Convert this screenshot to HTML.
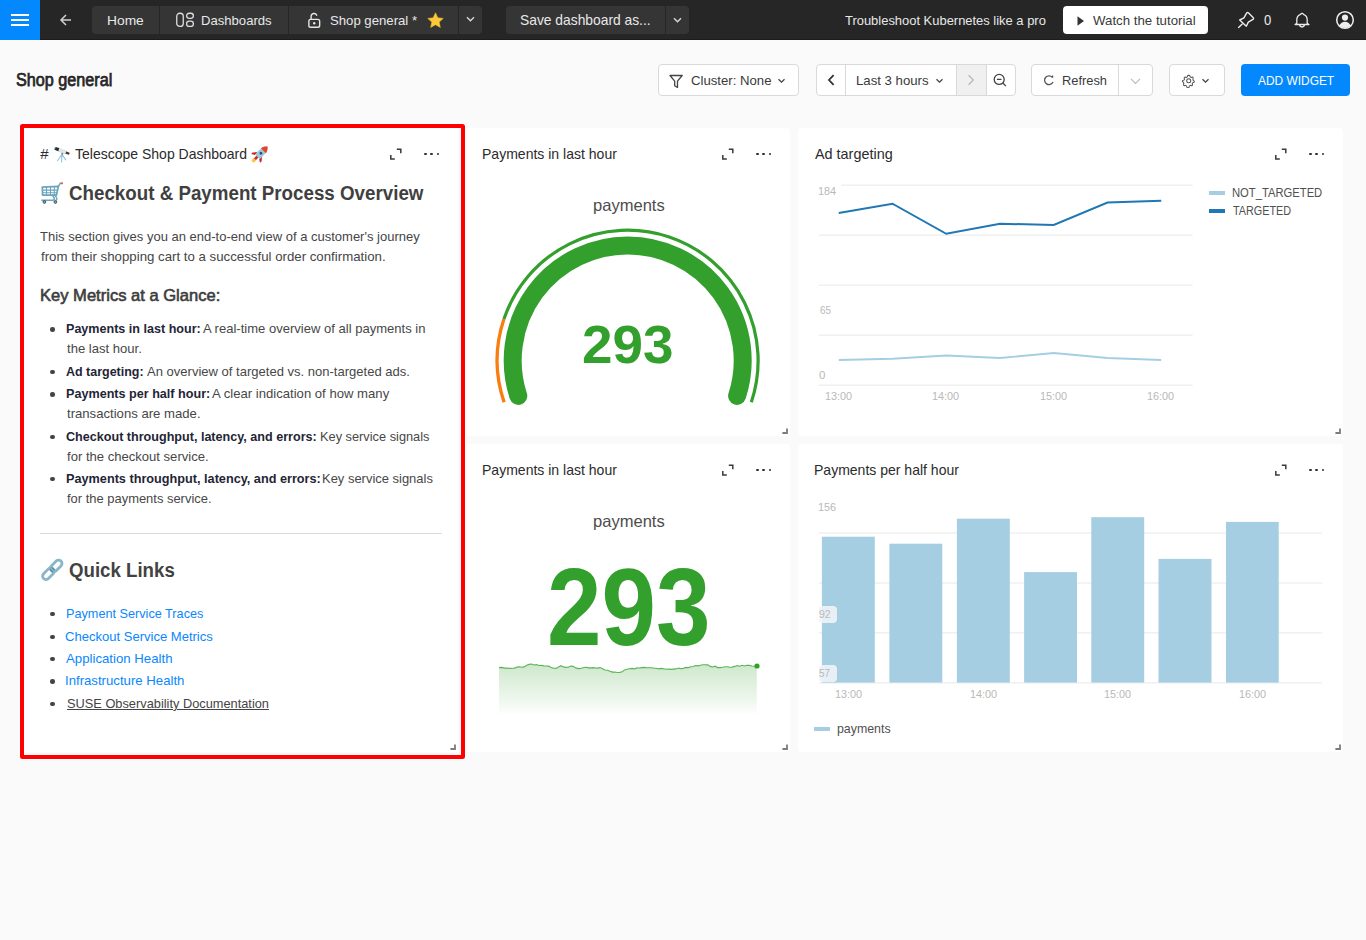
<!DOCTYPE html>
<html><head><meta charset="utf-8"><title>Shop general</title>
<style>
html,body{margin:0;padding:0;width:1366px;height:940px;overflow:hidden;background:#fafafa;font-family:"Liberation Sans", sans-serif;}
.t{position:absolute;white-space:pre;line-height:normal;font-family:"Liberation Sans", sans-serif;transform-origin:0 0;}
.r{position:absolute;box-sizing:border-box;}
.s{position:absolute;overflow:visible;}
</style></head><body>
<div class="r" style="left:0px;top:0px;width:1366px;height:40px;background:#262626"></div>
<div class="r" style="left:0px;top:39px;width:1366px;height:1px;background:#1c1c1c"></div>
<div class="r" style="left:0px;top:0px;width:40px;height:40px;background:#0388fe"></div>
<div class="r" style="left:11px;top:14px;width:18px;height:2px;background:#fff"></div>
<div class="r" style="left:11px;top:19px;width:18px;height:2px;background:#fff"></div>
<div class="r" style="left:11px;top:24px;width:18px;height:2px;background:#fff"></div>
<svg class="s" style="left:58px;top:12px;" width="16" height="16" viewBox="0 0 16 16"><path d="M13 8H3.5M8 3L3 8l5 5" fill="none" stroke="#cfcfcf" stroke-width="1.5"/></svg>
<div class="r" style="left:92px;top:6px;width:390px;height:28px;background:#353535;border-radius:4px"></div>
<div class="r" style="left:159px;top:6px;width:1px;height:28px;background:#262626"></div>
<div class="r" style="left:288px;top:6px;width:1px;height:28px;background:#262626"></div>
<div class="r" style="left:458px;top:6px;width:1px;height:28px;background:#262626"></div>
<span id="t0" class="t" style="left:107.42px;top:13.00px;font-size:13px;font-weight:400;color:#e8e8e8;transform:scaleX(1.0606);">Home</span>
<svg class="s" style="left:175px;top:12px;" width="20" height="17" viewBox="0 0 20 17"><rect x="1.75" y="1.25" width="6.5" height="13.2" rx="3" fill="none" stroke="#dedede" stroke-width="1.3"/><rect x="11.65" y="1.25" width="6.7" height="5.1" rx="2.5" fill="none" stroke="#dedede" stroke-width="1.3"/><rect x="11.65" y="9.15" width="6.7" height="5.3" rx="2.5" fill="none" stroke="#dedede" stroke-width="1.3"/></svg>
<span id="t1" class="t" style="left:201.49px;top:13.00px;font-size:13px;font-weight:400;color:#e8e8e8;transform:scaleX(1.0073);">Dashboards</span>
<svg class="s" style="left:307px;top:12px;" width="14" height="17" viewBox="0 0 14 17"><path d="M4.1 7.4V4.3a2.9 2.9 0 0 1 5.6 -1" fill="none" stroke="#e6e6e6" stroke-width="1.4" stroke-linecap="round"/><rect x="1.85" y="7.4" width="10.8" height="7.9" rx="1.8" fill="none" stroke="#e6e6e6" stroke-width="1.4"/><circle cx="7.2" cy="11.3" r="1.2" fill="#e6e6e6"/></svg>
<span id="t2" class="t" style="left:330.49px;top:13.00px;font-size:13px;font-weight:400;color:#e8e8e8;transform:scaleX(1.0118);">Shop general *</span>
<svg class="s" style="left:427px;top:12px;" width="17" height="16" viewBox="0 0 17 16"><path d="M8.5 0.8l2.3 5 5.4 .6-4 3.7 1.1 5.3-4.8-2.7-4.8 2.7 1.1-5.3-4-3.7 5.4-.6z" fill="#fdc93a" stroke="#f0b92a" stroke-width=".6" stroke-linejoin="round"/></svg>
<svg class="s" style="left:465px;top:15.3px;" width="11" height="8" viewBox="0 0 11 8"><path d="M2 2.2l3.5 3.5 3.5-3.5" fill="none" stroke="#d8d8d8" stroke-width="1.4"/></svg>
<div class="r" style="left:506px;top:6px;width:183px;height:28px;background:#353535;border-radius:4px"></div>
<div class="r" style="left:665px;top:6px;width:1px;height:28px;background:#262626"></div>
<span id="t3" class="t" style="left:520.08px;top:11.00px;font-size:15px;font-weight:400;color:#e8e8e8;transform:scaleX(0.9215);">Save dashboard as...</span>
<svg class="s" style="left:672px;top:16px;" width="11" height="8" viewBox="0 0 11 8"><path d="M2 2.2l3.5 3.5 3.5-3.5" fill="none" stroke="#d8d8d8" stroke-width="1.4"/></svg>
<span id="t4" class="t" style="left:845.00px;top:13.00px;font-size:13px;font-weight:400;color:#e8e8e8;transform:scaleX(0.9950);">Troubleshoot Kubernetes like a pro</span>
<div class="r" style="left:1063px;top:6px;width:145px;height:28px;background:#ffffff;border-radius:4px"></div>
<svg class="s" style="left:1076px;top:14.6px;" width="9" height="12" viewBox="0 0 9 12"><path d="M1.5 1.2L8 6 1.5 10.8z" fill="#333"/></svg>
<span id="t5" class="t" style="left:1093.00px;top:13.00px;font-size:13px;font-weight:400;color:#3a3a3a;transform:scaleX(1.0200);">Watch the tutorial</span>
<svg class="s" style="left:0px;top:0px;" width="1" height="1" viewBox="0 0 1 1"><path d="M1246.6 13.1Q1247.6 12.1 1248.6 13.1L1253.1 17.6Q1254.1 18.6 1253 19.3L1248.3 22.1L1246.3 26.2L1239.7 20.0L1243.9 17.9z" fill="none" stroke="#ececec" stroke-width="1.4" stroke-linejoin="round"/><path d="M1242.2 24.1L1238.6 27.4" stroke="#ececec" stroke-width="1.4" stroke-linecap="round"/></svg>
<span id="t6" class="t" style="left:1263.50px;top:12.00px;font-size:14px;font-weight:400;color:#e8e8e8;transform:scaleX(0.9341);">0</span>
<svg class="s" style="left:0px;top:0px;" width="1" height="1" viewBox="0 0 1 1"><path d="M1300.6 14.3A1.6 1.6 0 0 1 1303.4 14.3C1305.9 15.2 1307.2 17.2 1307.2 19.8V23.2L1308.9 24.5H1295.1L1296.8 23.2V19.8C1296.8 17.2 1298.1 15.2 1300.6 14.3z" fill="none" stroke="#ececec" stroke-width="1.3" stroke-linejoin="round"/><path d="M1299.6 24.6A2.4 2.4 0 0 0 1304.4 24.6" fill="none" stroke="#ececec" stroke-width="1.3"/></svg>
<svg class="s" style="left:1335px;top:10px;" width="20" height="20" viewBox="0 0 20 20"><circle cx="10" cy="10" r="8.3" fill="none" stroke="#eeeeee" stroke-width="1.5"/><circle cx="10" cy="7.6" r="3.1" fill="#eeeeee"/><path d="M4.3 15.6c1.2-2.6 3.1-3.9 5.7-3.9s4.5 1.3 5.7 3.9A8 8 0 0 1 4.3 15.6z" fill="#eeeeee"/></svg>
<span id="t7" class="t" style="left:15.58px;top:70.00px;font-size:18px;font-weight:400;color:#262626;transform:scaleX(0.8991);-webkit-text-stroke:0.75px #262626;">Shop general</span>
<div class="r" style="left:658px;top:64px;width:141px;height:32px;background:#fff;border:1px solid #d9d9d9;border-radius:4px"></div>
<svg class="s" style="left:668px;top:73px;" width="16" height="16" viewBox="0 0 16 16"><path d="M2 2.5h12.2l-4.7 5.6v6.3l-2.8-1.6V8.1z" fill="none" stroke="#444" stroke-width="1.3" stroke-linejoin="round"/></svg>
<span id="t8" class="t" style="left:690.73px;top:73.00px;font-size:13px;font-weight:400;color:#3a3a3a;transform:scaleX(1.0128);">Cluster: None</span>
<svg class="s" style="left:776px;top:77px;" width="11" height="8" viewBox="0 0 11 8"><path d="M2.5 2.2l3 3 3-3" fill="none" stroke="#444" stroke-width="1.3"/></svg>
<div class="r" style="left:816px;top:64px;width:200px;height:32px;background:#fff;border:1px solid #d9d9d9;border-radius:4px"></div>
<div class="r" style="left:957px;top:65px;width:29px;height:30px;background:#f0f0f0"></div>
<div class="r" style="left:845px;top:64px;width:1px;height:32px;background:#d9d9d9"></div>
<div class="r" style="left:956px;top:64px;width:1px;height:32px;background:#d9d9d9"></div>
<div class="r" style="left:986px;top:64px;width:1px;height:32px;background:#d9d9d9"></div>
<svg class="s" style="left:824px;top:72px;" width="14" height="16" viewBox="0 0 14 16"><path d="M9.6 3.2L5 8l4.6 4.8" fill="none" stroke="#333" stroke-width="1.8"/></svg>
<span id="t9" class="t" style="left:855.99px;top:73.00px;font-size:13px;font-weight:400;color:#3a3a3a;transform:scaleX(1.0143);">Last 3 hours</span>
<svg class="s" style="left:934px;top:77px;" width="11" height="8" viewBox="0 0 11 8"><path d="M2.5 2.2l3 3 3-3" fill="none" stroke="#444" stroke-width="1.3"/></svg>
<svg class="s" style="left:964px;top:72px;" width="14" height="16" viewBox="0 0 14 16"><path d="M4.6 3.2L9.2 8l-4.6 4.8" fill="none" stroke="#bbb" stroke-width="1.4"/></svg>
<svg class="s" style="left:992px;top:72px;" width="16" height="16" viewBox="0 0 16 16"><circle cx="7.2" cy="7.4" r="5" fill="none" stroke="#444" stroke-width="1.3"/><path d="M4.9 7.4h4.6M10.8 11l3.1 3.1" fill="none" stroke="#444" stroke-width="1.3"/></svg>
<div class="r" style="left:1031px;top:64px;width:122px;height:32px;background:#fff;border:1px solid #d9d9d9;border-radius:4px"></div>
<div class="r" style="left:1118px;top:64px;width:1px;height:32px;background:#d9d9d9"></div>
<svg class="s" style="left:1041px;top:72px;" width="16" height="16" viewBox="0 0 16 16"><path d="M11.37 5.37A4.4 4.4 0 1 0 11.99 10.06" fill="none" stroke="#555" stroke-width="1.3"/><path d="M11.6 3.6v2.1" fill="none" stroke="#555" stroke-width="1.2"/></svg>
<span id="t10" class="t" style="left:1061.51px;top:73.00px;font-size:13px;font-weight:400;color:#3a3a3a;transform:scaleX(0.9888);">Refresh</span>
<svg class="s" style="left:1129px;top:77px;" width="13" height="8" viewBox="0 0 13 8"><path d="M2 1.8l4.5 4.5 4.5-4.5" fill="none" stroke="#bbb" stroke-width="1.2"/></svg>
<div class="r" style="left:1169px;top:64px;width:56px;height:32px;background:#fff;border:1px solid #d9d9d9;border-radius:4px"></div>
<svg class="s" style="left:1181.5px;top:73.5px;" width="13.5" height="13.5" viewBox="0 0 13.5 13.5"><g transform="scale(0.84)"><path d="M8 1.6l1.3 .2.4 1.6 1.2.7 1.6-.5.9 1-.5 1.6.4 1.3 1.3 1.1-.2 1.3-1.6.4-.7 1.2.5 1.6-1 .9-1.6-.5-1.2.7-.4 1.6-1.3.2-1.3-.2-.4-1.6-1.2-.7-1.6.5-.9-1 .5-1.6-.4-1.3-1.3-1.1.2-1.3 1.6-.4.7-1.2-.5-1.6 1-.9 1.6.5 1.2-.7.4-1.6z" fill="none" stroke="#555" stroke-width="1.2" stroke-linejoin="round"/><circle cx="8" cy="8" r="2.4" fill="none" stroke="#555" stroke-width="1.2"/></g></svg>
<svg class="s" style="left:1200px;top:77px;" width="11" height="8" viewBox="0 0 11 8"><path d="M2.5 2.2l3 3 3-3" fill="none" stroke="#444" stroke-width="1.3"/></svg>
<div class="r" style="left:1241px;top:64px;width:109px;height:32px;background:#0388fe;border-radius:4px"></div>
<span id="t11" class="t" style="left:1257.52px;top:73.00px;font-size:13px;font-weight:400;color:#ffffff;transform:scaleX(0.9169);">ADD WIDGET</span>
<div class="r" style="left:19px;top:123px;width:447px;height:637px;background:#fff;border-radius:4px"></div>
<div class="r" style="left:20px;top:124px;width:445px;height:635px;background:#fff;border:4px solid #ff0000;border-radius:2.5px"></div>
<div class="r" style="left:458px;top:128px;width:3px;height:627px;background:#fafafa"></div>
<div class="r" style="left:24px;top:752px;width:434px;height:3px;background:#fafafa"></div>
<svg class="s" style="left:450px;top:744px;" width="6" height="6" viewBox="0 0 6 6"><path d="M5 0.4V5H0.4" fill="none" stroke="#7c7c7c" stroke-width="1.8"/></svg>
<span id="t12" class="t" style="left:40.00px;top:144.70px;font-size:15px;font-weight:400;color:#2b2b2b;"></span>
<svg class="s" style="left:388.5px;top:146.89999999999998px;" width="14" height="14" viewBox="0 0 14 14"><path d="M7.8 2.3h4v4M1.8 7.9v4h4" fill="none" stroke="#3a3a3a" stroke-width="1.5"/></svg>
<div class="r" style="left:424.2px;top:152.6px;width:2.7px;height:2.7px;background:#2f2f2f;border-radius:50%"></div>
<div class="r" style="left:430.4px;top:152.6px;width:2.7px;height:2.7px;background:#2f2f2f;border-radius:50%"></div>
<div class="r" style="left:436.59999999999997px;top:152.6px;width:2.7px;height:2.7px;background:#2f2f2f;border-radius:50%"></div>
<span id="t13" class="t" style="left:40.24px;top:144.70px;font-size:15px;font-weight:400;color:#2b2b2b;">#</span>
<svg class="s" style="left:0px;top:0px;" width="1" height="1" viewBox="0 0 1 1"><g transform="translate(53 144)"><path d="M9 10.3L4.5 16.7M9 10.3l-.4 7.6M9 10.3l3.7 5.6" fill="none" stroke="#8fc3da" stroke-width="1.1" stroke-linecap="round"/><path d="M5.5 4.2L14 7.6l-.9 2.4-8.6-3z" fill="#e6e6e6" stroke="#c9c9c9" stroke-width=".5"/><path d="M2.3 2.9l3.9 1.2-.9 3.1-3.9-1.4z" fill="#2a2a2a"/><path d="M2 3.2l.8.2-.9 2.6-.7-.3z" fill="#5aaed3"/><path d="M13.2 7.6l3.5 1.1-.7 2.1-3.5-1z" fill="#3a3a3a"/><circle cx="9.3" cy="9.7" r="1" fill="#5c8ea3"/></g></svg>
<span id="t14" class="t" style="left:75.24px;top:144.70px;font-size:15px;font-weight:400;color:#2b2b2b;transform:scaleX(0.9337);">Telescope Shop Dashboard</span>
<svg class="s" style="left:0px;top:0px;" width="1" height="1" viewBox="0 0 1 1"><g transform="translate(260.3 153.8) rotate(45)"><path d="M-1.3 3.5h2.6v4.6h-2.6z" fill="#c92a2a"/><ellipse cx="0" cy="9.3" rx="1.9" ry="2" fill="#f7c948"/><path d="M-3.1 0.5L-6.4 4.6-6.2 6.6-3 4.6z" fill="#d0242b"/><path d="M3.1 0.5L6.4 4.6 6.2 6.6 3 4.6z" fill="#d0242b"/><path d="M0 -10.2C3.6 -7.2 3.7 -2.2 3.2 4.2H-3.2C-3.7 -2.2 -3.6 -7.2 0 -10.2z" fill="#98c9df"/><path d="M0 -10.2C2.5 -8.1 3.3 -6.3 3.5 -4.4H-3.5C-3.3 -6.3 -2.5 -8.1 0 -10.2z" fill="#e5462b"/><circle cx="0" cy="-0.9" r="1.4" fill="#34495e"/></g></svg>
<svg class="s" style="left:0px;top:0px;" width="1" height="1" viewBox="0 0 1 1"><g fill="none" stroke="#6ba5bd" stroke-linejoin="round" stroke-linecap="round"><path d="M42.3 187.2L58.4 186.4 56.4 195.2H42.6z" fill="#ffffff" stroke-width="1.7"/><path d="M43 190.1h14.5M43 192.7h13.6M46.5 187v8M50.5 187v8M54.3 186.8v8" stroke-width="1.1"/><path d="M58.4 186.4L60.3 183.2H61.8" stroke-width="1.5"/><path d="M52.5 195.4l1.6 2.4c.5 .9 .2 2.2-1 2.4H41.9" stroke-width="1.6"/><path d="M55 195.4l1.7 2.4c.5 .9 .3 2.2-.8 2.4" stroke-width="1.3"/></g><circle cx="62" cy="183.3" r="1.1" fill="#e2604c"/><circle cx="44.4" cy="202" r="1.4" fill="#6ba5bd" stroke="#444" stroke-width=".8"/><circle cx="55.4" cy="202" r="1.4" fill="#6ba5bd" stroke="#444" stroke-width=".8"/></svg>
<span id="t15" class="t" style="left:69.06px;top:182.00px;font-size:20px;font-weight:700;color:#404040;transform:scaleX(0.9377);">Checkout &amp; Payment Process Overview</span>
<span id="t16" class="t" style="left:40.00px;top:228.90px;font-size:13px;font-weight:400;color:#454545;">This section gives you an end-to-end view of a customer&#x27;s journey</span>
<span id="t17" class="t" style="left:40.52px;top:248.60px;font-size:13px;font-weight:400;color:#454545;transform:scaleX(1.0190);">from their shopping cart to a successful order confirmation.</span>
<span id="t18" class="t" style="left:39.50px;top:285.70px;font-size:16.5px;font-weight:400;color:#3d3d3d;transform:scaleX(1.0028);-webkit-text-stroke:0.6px #3d3d3d;">Key Metrics at a Glance:</span>
<div class="r" style="left:50.25px;top:327.09999999999997px;width:4.5px;height:4.5px;background:#444;border-radius:50%"></div>
<span id="t19" class="t" style="left:65.51px;top:321.20px;font-size:13px;font-weight:700;color:#1f2536;transform:scaleX(0.9664);">Payments in last hour:</span>
<span id="t20" class="t" style="left:203.26px;top:321.20px;font-size:13px;font-weight:400;color:#474747;transform:scaleX(1.0032);">A real-time overview of all payments in</span>
<span id="t21" class="t" style="left:66.76px;top:341.10px;font-size:13px;font-weight:400;color:#474747;transform:scaleX(1.0055);">the last hour.</span>
<div class="r" style="left:50.25px;top:369.5px;width:4.5px;height:4.5px;background:#444;border-radius:50%"></div>
<span id="t22" class="t" style="left:66.48px;top:363.60px;font-size:13px;font-weight:700;color:#1f2536;transform:scaleX(0.9600);">Ad targeting:</span>
<span id="t23" class="t" style="left:147.48px;top:363.60px;font-size:13px;font-weight:400;color:#474747;transform:scaleX(1.0023);">An overview of targeted vs. non-targeted ads.</span>
<div class="r" style="left:50.25px;top:392.09999999999997px;width:4.5px;height:4.5px;background:#444;border-radius:50%"></div>
<span id="t24" class="t" style="left:65.51px;top:386.20px;font-size:13px;font-weight:700;color:#1f2536;transform:scaleX(0.9694);">Payments per half hour:</span>
<span id="t25" class="t" style="left:212.48px;top:386.20px;font-size:13px;font-weight:400;color:#474747;transform:scaleX(1.0091);">A clear indication of how many</span>
<span id="t26" class="t" style="left:66.76px;top:406.10px;font-size:13px;font-weight:400;color:#474747;transform:scaleX(1.0099);">transactions are made.</span>
<div class="r" style="left:50.25px;top:434.9px;width:4.5px;height:4.5px;background:#444;border-radius:50%"></div>
<span id="t27" class="t" style="left:66.48px;top:429.00px;font-size:13px;font-weight:700;color:#1f2536;transform:scaleX(0.9678);">Checkout throughput, latency, and errors:</span>
<span id="t28" class="t" style="left:320.28px;top:429.00px;font-size:13px;font-weight:400;color:#474747;transform:scaleX(0.9837);">Key service signals</span>
<span id="t29" class="t" style="left:66.76px;top:448.90px;font-size:13px;font-weight:400;color:#474747;transform:scaleX(1.0050);">for the checkout service.</span>
<div class="r" style="left:50.25px;top:476.59999999999997px;width:4.5px;height:4.5px;background:#444;border-radius:50%"></div>
<span id="t30" class="t" style="left:65.50px;top:470.70px;font-size:13px;font-weight:700;color:#1f2536;transform:scaleX(0.9753);">Payments throughput, latency, and errors:</span>
<span id="t31" class="t" style="left:321.76px;top:470.70px;font-size:13px;font-weight:400;color:#474747;transform:scaleX(0.9964);">Key service signals</span>
<span id="t32" class="t" style="left:66.76px;top:490.60px;font-size:13px;font-weight:400;color:#474747;transform:scaleX(0.9952);">for the payments service.</span>
<div class="r" style="left:40px;top:533px;width:402px;height:1px;background:#dcdcdc"></div>
<svg class="s" style="left:0px;top:0px;" width="1" height="1" viewBox="0 0 1 1"><g transform="translate(52.3 569.8) rotate(-45)" fill="none" stroke="#89b6c9" stroke-width="2.8"><rect x="-12.3" y="-3.4" width="13.6" height="6.8" rx="3.4"/><rect x="-1.3" y="-3.4" width="13.6" height="6.8" rx="3.4"/><path d="M-1.3 -2.2v4.4M1.3 -2.2v4.4" stroke="#4f8ea6" stroke-width="1.2"/></g></svg>
<span id="t33" class="t" style="left:68.78px;top:558.60px;font-size:19.5px;font-weight:700;color:#424242;transform:scaleX(0.9569);">Quick Links</span>
<div class="r" style="left:50.25px;top:611.6999999999999px;width:4.5px;height:4.5px;background:#444;border-radius:50%"></div>
<span id="t34" class="t" style="left:65.50px;top:605.80px;font-size:13px;font-weight:400;color:#0a87fd;transform:scaleX(0.9750);">Payment Service Traces</span>
<div class="r" style="left:50.25px;top:634.6px;width:4.5px;height:4.5px;background:#444;border-radius:50%"></div>
<span id="t35" class="t" style="left:65.48px;top:628.70px;font-size:13px;font-weight:400;color:#0a87fd;transform:scaleX(1.0027);">Checkout Service Metrics</span>
<div class="r" style="left:50.25px;top:656.5px;width:4.5px;height:4.5px;background:#444;border-radius:50%"></div>
<span id="t36" class="t" style="left:66.48px;top:650.60px;font-size:13px;font-weight:400;color:#0a87fd;transform:scaleX(1.0163);">Application Health</span>
<div class="r" style="left:50.25px;top:679.3px;width:4.5px;height:4.5px;background:#444;border-radius:50%"></div>
<span id="t37" class="t" style="left:65.47px;top:673.40px;font-size:13px;font-weight:400;color:#0a87fd;transform:scaleX(1.0138);">Infrastructure Health</span>
<div class="r" style="left:50.25px;top:701.6px;width:4.5px;height:4.5px;background:#444;border-radius:50%"></div>
<span id="t38" class="t" style="left:67.10px;top:695.70px;font-size:13px;font-weight:400;color:#444;transform:scaleX(0.9843);text-decoration:underline;text-underline-offset:1px;">SUSE Observability Documentation</span>
<div class="r" style="left:466px;top:128px;width:324px;height:308px;background:#fff;border-radius:4px"></div>
<svg class="s" style="left:782px;top:428px;" width="6" height="6" viewBox="0 0 6 6"><path d="M5 0.4V5H0.4" fill="none" stroke="#7c7c7c" stroke-width="1.8"/></svg>
<span id="t39" class="t" style="left:482.05px;top:144.70px;font-size:15px;font-weight:400;color:#2b2b2b;transform:scaleX(0.9350);">Payments in last hour</span>
<svg class="s" style="left:720.5px;top:146.89999999999998px;" width="14" height="14" viewBox="0 0 14 14"><path d="M7.8 2.3h4v4M1.8 7.9v4h4" fill="none" stroke="#3a3a3a" stroke-width="1.5"/></svg>
<div class="r" style="left:756.2px;top:152.6px;width:2.7px;height:2.7px;background:#2f2f2f;border-radius:50%"></div>
<div class="r" style="left:762.4000000000001px;top:152.6px;width:2.7px;height:2.7px;background:#2f2f2f;border-radius:50%"></div>
<div class="r" style="left:768.6px;top:152.6px;width:2.7px;height:2.7px;background:#2f2f2f;border-radius:50%"></div>
<span id="t40" class="t" style="left:592.52px;top:196.00px;font-size:16.5px;font-weight:400;color:#4d4d4d;transform:scaleX(1.0029);">payments</span>
<svg class="s" style="left:466px;top:128px;" width="324" height="308" viewBox="0 0 324 308"><path d="M38.09 274.34A130.5 130.5 0 0 1 37.94 191.09" fill="none" stroke="#fa7d10" stroke-width="3.3"/><path d="M37.94 191.09A130.5 130.5 0 1 1 285.31 274.34" fill="none" stroke="#339f2d" stroke-width="3.2"/><path d="M52.27 267.85A115 115 0 1 1 271.13 267.85" fill="none" stroke="#339f2d" stroke-width="18" stroke-linecap="round"/></svg>
<span id="t41" class="t" style="left:582.17px;top:314.20px;font-size:53px;font-weight:700;color:#339f2d;transform:scaleX(1.0342);">293</span>
<div class="r" style="left:466px;top:444px;width:324px;height:308px;background:#fff;border-radius:4px"></div>
<svg class="s" style="left:782px;top:744px;" width="6" height="6" viewBox="0 0 6 6"><path d="M5 0.4V5H0.4" fill="none" stroke="#7c7c7c" stroke-width="1.8"/></svg>
<span id="t42" class="t" style="left:482.05px;top:460.70px;font-size:15px;font-weight:400;color:#2b2b2b;transform:scaleX(0.9350);">Payments in last hour</span>
<svg class="s" style="left:720.5px;top:462.9px;" width="14" height="14" viewBox="0 0 14 14"><path d="M7.8 2.3h4v4M1.8 7.9v4h4" fill="none" stroke="#3a3a3a" stroke-width="1.5"/></svg>
<div class="r" style="left:756.2px;top:468.59999999999997px;width:2.7px;height:2.7px;background:#2f2f2f;border-radius:50%"></div>
<div class="r" style="left:762.4000000000001px;top:468.59999999999997px;width:2.7px;height:2.7px;background:#2f2f2f;border-radius:50%"></div>
<div class="r" style="left:768.6px;top:468.59999999999997px;width:2.7px;height:2.7px;background:#2f2f2f;border-radius:50%"></div>
<span id="t43" class="t" style="left:592.52px;top:512.30px;font-size:16.5px;font-weight:400;color:#4d4d4d;transform:scaleX(1.0029);">payments</span>
<span id="t44" class="t" style="left:546.72px;top:543.50px;font-size:109.5px;font-weight:700;color:#339f2d;transform:scaleX(0.8949);">293</span>
<svg class="s" style="left:466px;top:444px;" width="324" height="308" viewBox="0 0 324 308"><defs><linearGradient id="sg" x1="0" y1="0" x2="0" y2="1"><stop offset="0" stop-color="#339f2d" stop-opacity="0.24"/><stop offset="0.75" stop-color="#339f2d" stop-opacity="0.07"/><stop offset="1" stop-color="#339f2d" stop-opacity="0"/></linearGradient></defs><path d="M33.0 223.6 L35.6 223.4 L38.3 224.1 L41.0 224.0 L43.6 224.4 L46.0 224.3 L48.5 224.1 L50.9 223.1 L53.4 222.8 L55.8 223.2 L58.2 222.9 L60.7 221.3 L63.1 220.4 L65.6 220.0 L68.0 221.0 L70.5 220.6 L73.0 221.5 L75.4 221.3 L77.8 221.9 L80.3 222.0 L82.7 222.1 L85.1 223.4 L87.6 224.3 L90.0 224.4 L92.5 223.1 L95.0 221.7 L97.5 222.9 L99.9 223.4 L102.3 223.3 L104.8 222.1 L107.2 222.4 L109.7 223.9 L112.1 224.6 L114.5 224.5 L117.0 223.8 L119.5 223.2 L121.9 223.6 L124.3 224.1 L126.7 223.6 L129.2 223.9 L131.6 224.1 L134.0 223.6 L136.5 224.8 L139.0 226.0 L141.5 226.2 L144.0 227.3 L146.4 228.1 L148.9 228.0 L151.3 228.5 L153.8 228.4 L156.2 227.7 L158.6 225.9 L161.1 225.3 L163.5 224.7 L166.0 224.4 L168.4 224.9 L170.9 223.9 L173.3 224.0 L175.7 223.6 L178.2 223.4 L180.6 223.8 L183.0 223.7 L185.5 223.8 L188.0 224.2 L190.4 224.3 L192.8 224.9 L195.3 224.4 L197.8 224.7 L200.2 225.2 L202.6 225.1 L205.1 225.4 L207.5 225.1 L210.0 224.9 L212.5 224.1 L214.9 224.7 L217.3 224.4 L219.8 223.4 L222.2 223.6 L224.7 222.7 L227.1 222.5 L229.6 221.5 L232.0 221.9 L234.5 221.2 L236.9 220.7 L239.3 220.8 L241.8 220.9 L244.2 222.4 L246.7 223.0 L249.1 222.2 L251.6 223.6 L254.0 223.6 L256.5 223.3 L258.9 222.7 L261.4 222.7 L263.8 223.2 L266.2 223.1 L268.7 222.4 L271.2 221.6 L273.6 222.2 L276.0 221.3 L278.5 222.0 L281.0 221.3 L283.4 221.4 L285.9 222.0 L288.3 222.3 L290.8 221.7 L290.8 271 L33 271 Z" fill="url(#sg)"/><path d="M33.0 223.6 L35.6 223.4 L38.3 224.1 L41.0 224.0 L43.6 224.4 L46.0 224.3 L48.5 224.1 L50.9 223.1 L53.4 222.8 L55.8 223.2 L58.2 222.9 L60.7 221.3 L63.1 220.4 L65.6 220.0 L68.0 221.0 L70.5 220.6 L73.0 221.5 L75.4 221.3 L77.8 221.9 L80.3 222.0 L82.7 222.1 L85.1 223.4 L87.6 224.3 L90.0 224.4 L92.5 223.1 L95.0 221.7 L97.5 222.9 L99.9 223.4 L102.3 223.3 L104.8 222.1 L107.2 222.4 L109.7 223.9 L112.1 224.6 L114.5 224.5 L117.0 223.8 L119.5 223.2 L121.9 223.6 L124.3 224.1 L126.7 223.6 L129.2 223.9 L131.6 224.1 L134.0 223.6 L136.5 224.8 L139.0 226.0 L141.5 226.2 L144.0 227.3 L146.4 228.1 L148.9 228.0 L151.3 228.5 L153.8 228.4 L156.2 227.7 L158.6 225.9 L161.1 225.3 L163.5 224.7 L166.0 224.4 L168.4 224.9 L170.9 223.9 L173.3 224.0 L175.7 223.6 L178.2 223.4 L180.6 223.8 L183.0 223.7 L185.5 223.8 L188.0 224.2 L190.4 224.3 L192.8 224.9 L195.3 224.4 L197.8 224.7 L200.2 225.2 L202.6 225.1 L205.1 225.4 L207.5 225.1 L210.0 224.9 L212.5 224.1 L214.9 224.7 L217.3 224.4 L219.8 223.4 L222.2 223.6 L224.7 222.7 L227.1 222.5 L229.6 221.5 L232.0 221.9 L234.5 221.2 L236.9 220.7 L239.3 220.8 L241.8 220.9 L244.2 222.4 L246.7 223.0 L249.1 222.2 L251.6 223.6 L254.0 223.6 L256.5 223.3 L258.9 222.7 L261.4 222.7 L263.8 223.2 L266.2 223.1 L268.7 222.4 L271.2 221.6 L273.6 222.2 L276.0 221.3 L278.5 222.0 L281.0 221.3 L283.4 221.4 L285.9 222.0 L288.3 222.3 L290.8 221.7" fill="none" stroke="#5cb356" stroke-width="1.1"/><circle cx="291" cy="222" r="2.6" fill="#339f2d"/></svg>
<div class="r" style="left:798px;top:128px;width:545px;height:308px;background:#fff;border-radius:4px"></div>
<svg class="s" style="left:1335px;top:428px;" width="6" height="6" viewBox="0 0 6 6"><path d="M5 0.4V5H0.4" fill="none" stroke="#7c7c7c" stroke-width="1.8"/></svg>
<span id="t45" class="t" style="left:814.76px;top:144.70px;font-size:15px;font-weight:400;color:#2b2b2b;transform:scaleX(0.9600);">Ad targeting</span>
<svg class="s" style="left:1273.5px;top:146.89999999999998px;" width="14" height="14" viewBox="0 0 14 14"><path d="M7.8 2.3h4v4M1.8 7.9v4h4" fill="none" stroke="#3a3a3a" stroke-width="1.5"/></svg>
<div class="r" style="left:1309.2px;top:152.6px;width:2.7px;height:2.7px;background:#2f2f2f;border-radius:50%"></div>
<div class="r" style="left:1315.4px;top:152.6px;width:2.7px;height:2.7px;background:#2f2f2f;border-radius:50%"></div>
<div class="r" style="left:1321.6000000000001px;top:152.6px;width:2.7px;height:2.7px;background:#2f2f2f;border-radius:50%"></div>
<svg class="s" style="left:798px;top:128px;" width="545" height="308" viewBox="0 0 545 308"><rect x="21" y="106.5" width="373.5" height="1.5" fill="#f0f0f0"/><rect x="21" y="156.5" width="373.5" height="1.5" fill="#f0f0f0"/><rect x="21" y="206.5" width="373.5" height="1.5" fill="#f0f0f0"/><rect x="21" y="256.5" width="373.5" height="1.5" fill="#f0f0f0"/><rect x="43" y="56.5" width="351.5" height="1.5" fill="#f0f0f0"/><polyline points="40.75,232.00 94.50,230.75 148.25,227.50 202.00,230.00 255.75,225.00 309.50,230.00 363.25,232.00" fill="none" stroke="#a6cee3" stroke-width="1.8"/><polyline points="40.75,85.00 94.50,75.75 148.25,105.75 202.00,95.75 255.75,97.00 309.50,74.50 363.25,72.75" fill="none" stroke="#1f78b4" stroke-width="2"/></svg>
<span id="t46" class="t" style="left:818.04px;top:185.00px;font-size:11.5px;font-weight:400;color:#b9b9b9;transform:scaleX(0.9444);">184</span>
<span id="t47" class="t" style="left:819.71px;top:304.00px;font-size:11.5px;font-weight:400;color:#b9b9b9;transform:scaleX(0.8676);">65</span>
<span id="t48" class="t" style="left:818.98px;top:368.80px;font-size:11.5px;font-weight:400;color:#b9b9b9;">0</span>
<span id="t49" class="t" style="left:825.32px;top:390.00px;font-size:11.5px;font-weight:400;color:#b9b9b9;transform:scaleX(0.9436);">13:00</span>
<span id="t50" class="t" style="left:932.32px;top:390.00px;font-size:11.5px;font-weight:400;color:#b9b9b9;transform:scaleX(0.9436);">14:00</span>
<span id="t51" class="t" style="left:1039.67px;top:390.00px;font-size:11.5px;font-weight:400;color:#b9b9b9;transform:scaleX(0.9436);">15:00</span>
<span id="t52" class="t" style="left:1147.32px;top:390.00px;font-size:11.5px;font-weight:400;color:#b9b9b9;transform:scaleX(0.9436);">16:00</span>
<div class="r" style="left:1209px;top:191px;width:16px;height:4px;background:#a6cee3"></div>
<div class="r" style="left:1209px;top:209.3px;width:16px;height:4px;background:#1f78b4"></div>
<span id="t53" class="t" style="left:1232.10px;top:185.70px;font-size:12.5px;font-weight:400;color:#505050;transform:scaleX(0.8980);">NOT_TARGETED</span>
<span id="t54" class="t" style="left:1233.00px;top:203.50px;font-size:12.5px;font-weight:400;color:#505050;transform:scaleX(0.8657);">TARGETED</span>
<div class="r" style="left:798px;top:444px;width:545px;height:308px;background:#fff;border-radius:4px"></div>
<svg class="s" style="left:1335px;top:744px;" width="6" height="6" viewBox="0 0 6 6"><path d="M5 0.4V5H0.4" fill="none" stroke="#7c7c7c" stroke-width="1.8"/></svg>
<span id="t55" class="t" style="left:813.83px;top:460.70px;font-size:15px;font-weight:400;color:#2b2b2b;transform:scaleX(0.9344);">Payments per half hour</span>
<svg class="s" style="left:1273.5px;top:462.9px;" width="14" height="14" viewBox="0 0 14 14"><path d="M7.8 2.3h4v4M1.8 7.9v4h4" fill="none" stroke="#3a3a3a" stroke-width="1.5"/></svg>
<div class="r" style="left:1309.2px;top:468.59999999999997px;width:2.7px;height:2.7px;background:#2f2f2f;border-radius:50%"></div>
<div class="r" style="left:1315.4px;top:468.59999999999997px;width:2.7px;height:2.7px;background:#2f2f2f;border-radius:50%"></div>
<div class="r" style="left:1321.6000000000001px;top:468.59999999999997px;width:2.7px;height:2.7px;background:#2f2f2f;border-radius:50%"></div>
<svg class="s" style="left:798px;top:444px;" width="545" height="308" viewBox="0 0 545 308"><rect x="21" y="88.29999999999995" width="503" height="1.5" fill="#f0f0f0"/><rect x="21" y="138.29999999999995" width="503" height="1.5" fill="#f0f0f0"/><rect x="21" y="188.10000000000002" width="503" height="1.5" fill="#f0f0f0"/><rect x="21" y="238.10000000000002" width="503" height="1.5" fill="#f0f0f0"/><rect x="23.9" y="92.7" width="52.9" height="145.9" fill="#a6cee3"/><rect x="91.4" y="99.7" width="52.9" height="138.9" fill="#a6cee3"/><rect x="158.9" y="74.7" width="52.9" height="163.9" fill="#a6cee3"/><rect x="226.1" y="128.1" width="52.9" height="110.5" fill="#a6cee3"/><rect x="293.3" y="73.2" width="52.9" height="165.4" fill="#a6cee3"/><rect x="360.5" y="114.9" width="53.0" height="123.7" fill="#a6cee3"/><rect x="428.0" y="77.9" width="52.7" height="160.7" fill="#a6cee3"/><rect x="21" y="162" width="18" height="17" rx="4" fill="#eef3f6" fill-opacity="0.92"/><rect x="21" y="221" width="18" height="17" rx="4" fill="#eef3f6" fill-opacity="0.92"/></svg>
<span id="t56" class="t" style="left:818.04px;top:501.00px;font-size:11.5px;font-weight:400;color:#b9b9b9;transform:scaleX(0.9444);">156</span>
<span id="t57" class="t" style="left:818.86px;top:608.00px;font-size:11.5px;font-weight:400;color:#b9b9b9;transform:scaleX(0.9167);">92</span>
<span id="t58" class="t" style="left:818.93px;top:666.60px;font-size:11.5px;font-weight:400;color:#b9b9b9;transform:scaleX(0.8532);">57</span>
<span id="t59" class="t" style="left:834.80px;top:687.70px;font-size:11.5px;font-weight:400;color:#b9b9b9;transform:scaleX(0.9436);">13:00</span>
<span id="t60" class="t" style="left:969.54px;top:687.70px;font-size:11.5px;font-weight:400;color:#b9b9b9;transform:scaleX(0.9436);">14:00</span>
<span id="t61" class="t" style="left:1104.32px;top:687.70px;font-size:11.5px;font-weight:400;color:#b9b9b9;transform:scaleX(0.9436);">15:00</span>
<span id="t62" class="t" style="left:1238.56px;top:687.70px;font-size:11.5px;font-weight:400;color:#b9b9b9;transform:scaleX(0.9436);">16:00</span>
<div class="r" style="left:814px;top:727px;width:16px;height:4px;background:#a6cee3"></div>
<span id="t63" class="t" style="left:837.29px;top:721.40px;font-size:13px;font-weight:400;color:#505050;transform:scaleX(0.9509);">payments</span>
</body></html>
